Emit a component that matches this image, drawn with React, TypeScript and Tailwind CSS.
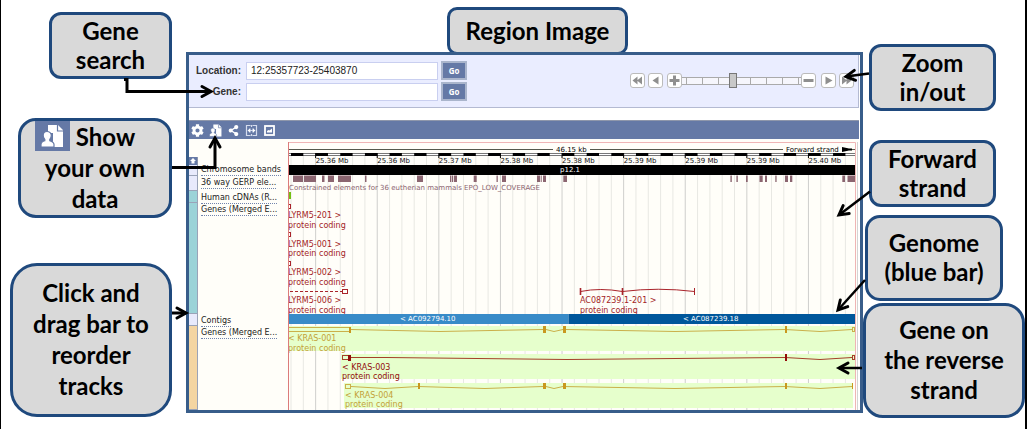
import React from "react";
import { FaCog, FaShareAlt } from "react-icons/fa";

const GRID_START = 291;
const GRID_STEP = 12.32;

const gridLines = Array.from({ length: 46 }, (_, i) => ({
  x: GRID_START + i * GRID_STEP,
  major: i % 5 === 2,
}));

const rulerLabels = [
  "25.36 Mb",
  "25.36 Mb",
  "25.37 Mb",
  "25.38 Mb",
  "25.38 Mb",
  "25.39 Mb",
  "25.39 Mb",
  "25.39 Mb",
  "25.40 Mb",
];

const gerpElements: [number, number][] = [
  [293, 10], [304, 12], [322, 2.5], [328, 6], [338, 13], [365, 1.5], [417, 6],
  [450, 1.3], [452, 1.2], [454, 3], [473.7, 3], [496.5, 1.3], [502, 4],
  [537, 3], [540.7, 1], [543, 3], [563.3, 3.7], [730.4, 1.4], [736.4, 1.4],
  [746, 1.7], [759.5, 3.2], [765, 2], [775.3, 1.3], [785, 3], [790, 2.3],
  [842.3, 2.7], [847.5, 8],
];

function Callout({ lines, className, icon }: { lines: string[]; className: string; icon?: React.ReactNode }) {
  return (
    <div
      className={`flex flex-col items-center justify-center border-3 border-[#1f497d] bg-[#d9d9d9] pb-0.5 text-center font-['Lato',sans-serif] text-[24px] font-bold text-black ${className}`}
    >
      {lines.map((line, i) => (
        <span key={line} className={`flex items-center gap-1.5 whitespace-nowrap ${icon && i === 0 ? "pr-5" : ""}`}>
          {i === 0 && icon}
          {line}
        </span>
      ))}
    </div>
  );
}

function UserDataIcon({ className }: { className: string }) {
  return (
    <svg viewBox="0 0 24 24" className={className} aria-hidden="true">
      <path d="M8 1h10l5 5v17H13V9H8z" fill="#fff" />
      <path d="M17.500 1v6H23" fill="none" stroke="#6579a6" strokeWidth="1.200" />
      <path
        d="M7 7.500c-2.500 0-3.800 1.800-3.800 4 0 1.800.8 3 1.600 3.800v1.400C2.500 17.400 1 18.400 1 20.500V23h13v-2.500c0-2.100-2-3.100-4.200-3.800v-1.400c.8-.8 1.500-2 1.500-3.800 0-2.200-1.800-4-4.300-4z"
        fill="#fff"
        stroke="#6579a6"
        strokeWidth="1.200"
      />
    </svg>
  );
}

function ResizeIcon() {
  return (
    <svg viewBox="0 0 13 13" className="size-[13px]" aria-hidden="true">
      <path d="M5.500 1.500h-4v10h4M7.500 1.500h4v10h-4M6.500 1v2M6.500 10v2" fill="none" stroke="#d5dcee" strokeWidth="1.200" />
      <path d="M3 6.500h7M5 4.500v4M8 4.500v4" stroke="#d5dcee" strokeWidth="1.200" />
      <path d="M2.500 6.500l2.500-2v4zM10.500 6.500l-2.500-2v4z" fill="#fff" />
    </svg>
  );
}

function PictureIcon() {
  return (
    <svg viewBox="0 0 13 13" className="size-[13px]" aria-hidden="true">
      <rect x="2" y="2" width="9" height="9" fill="none" stroke="#fff" strokeWidth="1.800" />
      <path d="M4 8.500V7l1.500-1 1 .5L9 4.500v4z" fill="#fff" />
    </svg>
  );
}

function SearchRow({ id, label, value }: { id: string; label: string; value: string }) {
  return (
    <form className="flex items-center" onSubmit={(e) => e.preventDefault()}>
      <label htmlFor={id} className="w-[52px] text-right text-[10px] leading-3 font-bold text-[#333]">
        {label}
      </label>
      <input
        id={id}
        defaultValue={value}
        className="ml-[5px] h-[18px] w-[192px] border border-[#c9cff0] bg-white px-1 text-[10px] text-[#222] outline-none"
      />
      <button className="ml-[3px] h-[19px] w-[26px] border-2 border-[#aab5cc] bg-[#6579a6] font-['Open_Sans',sans-serif] text-[8px] leading-3 font-bold text-white">
        Go
      </button>
    </form>
  );
}

function NavButton({ label, path, className = "" }: { label: string; path: string; className?: string }) {
  return (
    <button aria-label={label} className={`size-[15px] rounded-[3px] border border-[#bbb] bg-white ${className}`}>
      <svg viewBox="0 0 13 13" className="size-[13px]" aria-hidden="true">
        <path d={path} fill="#8f8f8f" />
      </svg>
    </button>
  );
}

function ZoomControl() {
  return (
    <div className="flex items-center">
      <NavButton label="Scroll far left" path="M6.500 2.500v8L1.500 6.500zM11 2.500v8L6 6.500z" className="mr-[3px]" />
      <NavButton label="Scroll left" path="M9.500 2.500v8l-6-4z" className="mr-1" />
      <NavButton label="Zoom in" path="M5 1.500h3v3.500h3.500v3H8v3.500H5V8H1.500V5H5z" />
      <input
        type="range"
        aria-label="Zoom level"
        min={0}
        max={12}
        step="any"
        defaultValue={5.1}
        className="h-2 w-[119px] appearance-none border-y border-[#aaa] bg-[#f6f6fc] bg-[repeating-linear-gradient(90deg,transparent_0px,transparent_4px,#aaa_4px,#aaa_5px,transparent_5px,transparent_16px)] [&::-webkit-slider-thumb]:h-[15px] [&::-webkit-slider-thumb]:w-2 [&::-webkit-slider-thumb]:appearance-none [&::-webkit-slider-thumb]:border [&::-webkit-slider-thumb]:border-[#777] [&::-webkit-slider-thumb]:bg-[#c8c8c8]"
      />
      <NavButton label="Zoom out" path="M1.500 5h10v3h-10z" className="mr-[5px]" />
      <NavButton label="Scroll right" path="M3.500 2.500v8l7-4z" className="mr-[3px]" />
      <NavButton label="Scroll far right" path="M2 2.500v8l5-4zM6.500 2.500v8l5-4z" />
    </div>
  );
}

const tracks = [
  { name: "Chromosome bands", row: "h-[11px]", handle: "bg-[#e8eafc]" },
  { name: "36 way GERP ele...", row: "h-[15px]", handle: "bg-[#e8eafc]" },
  { name: "Human cDNAs (R...", row: "h-3", handle: "bg-[#9bd3d8]" },
  { name: "Genes (Merged E...", row: "h-[111px]", handle: "bg-[#9bd3d8]" },
  { name: "Contigs", row: "h-3", handle: "bg-[#e8eafc]" },
  { name: "Genes (Merged E...", row: "h-[84px]", handle: "bg-[#f4d5a2]" },
];

function TrackList() {
  return (
    <div className="w-[97px] shrink-0 pt-[18px]">
      <div className="flex h-2 w-[9px] items-center justify-center border-r border-[#8d96ad] bg-[#6579a6]">
        <svg viewBox="0 0 8 8" className="size-2" aria-hidden="true">
          <path d="M4 1l3 3H5.500v2.500h-3V4H1z" fill="#fff" />
        </svg>
      </div>
      {tracks.map((t, i) => (
        <div key={i} className={`flex items-start ${t.row}`}>
          <div className={`w-[9px] shrink-0 cursor-move self-stretch border-r border-b border-[#9aa3b8] ${t.handle}`} />
          <a
            href="#track"
            className={`ml-[3px] border-b border-dotted border-[#7184ad] font-['DejaVu_Sans',sans-serif] text-[8px] leading-[10px] whitespace-nowrap text-[#222] ${i > 0 ? "mt-0.5" : ""}`}
          >
            {t.name}
          </a>
        </div>
      ))}
    </div>
  );
}

function GeneLabel({ x, y, name }: { x: number; y: number; name: string }) {
  return (
    <>
      <text x={x} y={y}>{name}</text>
      <text x={x} y={y + 9.5}>protein coding</text>
    </>
  );
}

function RegionChart() {
  return (
    <svg
      viewBox="286 139 572 271"
      preserveAspectRatio="xMinYMin meet"
      className="block h-[271px] min-w-0 flex-1 font-['DejaVu_Sans',sans-serif] text-[8px]"
      role="img"
      aria-label="Genes on chromosome 12 region 25357723 to 25403870"
    >
      {gridLines.map(({ x, major }) => (
        <path key={x} d={`M${x} 156V410`} stroke={major ? "#cfcfcc" : "#e8e8e3"} strokeWidth="1" />
      ))}

      {/* Ruler */}
      <path d="M288 149.500H553M590 149.500H783M851 149.500H855.500" stroke="#55584c" />
      <path d="M842 147l7 1.500h3v2h-3L842 152z" fill="#000" />
      <g fill="#000" className="text-[7px]">
        <text x="556" y="152">46.15 kb</text>
        <text x="786" y="152">Forward strand</text>
      </g>
      <rect x="288" y="153" width="567.500" height="3" fill="#777" />
      <rect x="288" y="154" width="567.500" height="1" fill="#fff" />
      {gridLines.map(({ x }, i) =>
        i % 2 === 0 ? <rect key={x} x={x} y="153" width={Math.min(GRID_STEP, 855.5 - x)} height="3" fill="#000" /> : null,
      )}
      {rulerLabels.map((label, i) => {
        const x = GRID_START + (2 + i * 5) * GRID_STEP;
        return (
          <g key={i}>
            <path d={`M${x} 153v5`} stroke="#000" />
            <text x={x} y="163" fill="#111" className="text-[7px]">{label}</text>
          </g>
        );
      })}

      {/* Chromosome band */}
      <rect x="288" y="165" width="567.500" height="10" fill="#000" />
      <text x="560" y="172" fill="#fff" className="text-[7px]">p12.1</text>

      {/* Constrained elements */}
      {gerpElements.map(([x, w]) => (
        <rect key={x} x={x} y="175.500" width={w} height="6.500" fill="#8b6570" />
      ))}
      <text x="289" y="190" fill="#8b6570" className="text-[7px]">
        Constrained elements for 36 eutherian mammals EPO_LOW_COVERAGE
      </text>
      <rect x="288" y="192" width="3" height="7" fill="#74c012" />

      {/* Forward strand transcripts */}
      <g fill="none" stroke="#a9242b">
        <rect x="288.500" y="204.500" width="2" height="4" />
        <rect x="288.500" y="232.500" width="2" height="4" />
        <rect x="288.500" y="261.500" width="2" height="4" />
        <path d="M290 291.500H342" strokeDasharray="3 2" />
        <rect x="342.500" y="289.500" width="5" height="4" />
        <path d="M580.500 291.500Q600 287.500 622.500 291.500Q658 287 694.500 291.500" />
        <path d="M580.500 288v7M622.500 288v7" strokeWidth="1.600" />
        <path d="M694.500 288v7" />
      </g>
      <g fill="#a31d25">
        <GeneLabel x={288} y={218} name="LYRM5-201 >" />
        <GeneLabel x={288} y={246.5} name="LYRM5-001 >" />
        <GeneLabel x={288} y={275} name="LYRM5-002 >" />
        <GeneLabel x={288} y={303} name="LYRM5-006 >" />
        <GeneLabel x={580} y={303} name="AC087239.1-201 >" />
      </g>

      {/* Contigs */}
      <rect x="288" y="314" width="280.500" height="10" fill="#388bc8" />
      <rect x="568.500" y="314" width="287" height="10" fill="#00579b" />
      <g fill="#fff" className="text-[7px]">
        <text x="400" y="321">&lt; AC092794.10</text>
        <text x="683" y="321">&lt; AC087239.18</text>
      </g>

      {/* Reverse strand transcripts */}
      <g fill="#e6ffcc">
        <rect x="288" y="326" width="567.500" height="25" />
        <rect x="341" y="354" width="514.500" height="25" />
        <rect x="344" y="383" width="509" height="25" />
      </g>
      <g fill="none" stroke="#cbb04a">
        <rect x="288.500" y="327.500" width="61" height="4" />
        <path d="M351 329.500L440 331.500L543 329.500M546 329.500L554 331.500L563 329.500M566 329.500L675 331.500L785 329.500L820 331.500L852 329.500" />
        <rect x="852.500" y="327.500" width="2" height="4" />
        <rect x="345.500" y="384.500" width="5" height="4" />
        <path d="M351 386.500L385 388.500L418 386.500L485 388.500L543 386.500M546 386.500L554 388.500L563 386.500L675 388.500L785 386.500L820 388.500L852 386.500" />
      </g>
      <g fill="#c9981f">
        <rect x="349" y="327" width="2" height="6" />
        <rect x="543" y="326" width="3" height="7" />
        <rect x="563" y="326" width="3" height="7" />
        <rect x="785" y="326" width="2" height="7" />
        <rect x="418" y="383" width="2" height="6" />
        <rect x="543" y="383" width="3" height="6" />
        <rect x="563" y="383" width="3" height="6" />
        <rect x="785" y="383" width="2" height="6" />
        <rect x="852" y="383" width="1" height="6" />
      </g>
      <g fill="#c3a136">
        <GeneLabel x={288} y={341} name="< KRAS-001" />
        <GeneLabel x={345} y={397.5} name="< KRAS-004" />
      </g>
      <g fill="none" stroke="#a5402a">
        <rect x="342.500" y="355.500" width="6" height="4" />
        <path d="M351 357.500H387L567 359.500L785 357.500L820 359.500L852 357.500" />
        <rect x="852.500" y="355.500" width="2" height="4" />
      </g>
      <g fill="#930c0c">
        <rect x="348" y="355" width="3" height="6" />
        <rect x="785" y="354" width="2" height="7" />
        <GeneLabel x={342} y={369.5} name="< KRAS-003" />
      </g>

      <path d="M288 142.500H855.500V410" fill="none" stroke="#efb5b5" />
      <path d="M288.500 142V410" stroke="#dc7b7b" />
      <path d="M857.500 142V410" stroke="#d4d4d4" />
    </svg>
  );
}

function Browser() {
  return (
    <section className="relative border-3 border-[#385d8a] bg-white font-['Liberation_Sans',sans-serif]">
      <div className="mr-px flex h-[53px] justify-between border-r border-b border-[#b4bad2] bg-[#eaedff] pt-1.5">
        <div className="flex flex-col gap-0.5">
          <SearchRow id="location" label="Location:" value="12:25357723-25403870" />
          <SearchRow id="gene" label="Gene:" value="" />
        </div>
        <div className="pt-3 pr-1">
          <ZoomControl />
        </div>
      </div>
      <div className="mt-3 mr-px flex h-[19px] items-center gap-[5px] border-t border-[#8f97ab] bg-[#6579a6] pl-0.5 text-white">
        <button aria-label="Configure this image"><FaCog className="size-[13px]" /></button>
        <button aria-label="Show your own data"><UserDataIcon className="size-[13px]" /></button>
        <button aria-label="Share this image"><FaShareAlt className="size-[13px] p-px" /></button>
        <button aria-label="Resize this image"><ResizeIcon /></button>
        <button aria-label="Export this image"><PictureIcon /></button>
      </div>
      <div className="mr-0.5 flex bg-[#fffef9]">
        <TrackList />
        <RegionChart />
      </div>
    </section>
  );
}

function ArrowHead({ id }: { id: string }) {
  return (
    <marker id={id} markerUnits="userSpaceOnUse" orient="auto" markerWidth="16" markerHeight="16" refX="11" refY="7" overflow="visible">
      <path d="M2 2L11 7L2 12" fill="none" stroke="#000" strokeWidth="3" strokeLinecap="round" strokeLinejoin="miter" />
    </marker>
  );
}

export default function App() {
  return (
    <main className="relative flex min-h-screen items-start border-r-2 border-l border-black bg-white">
      <div className="flex w-[185px] shrink-0 flex-col items-end pt-3 pr-3.5">
        <Callout lines={["Gene", "search"]} className="h-[67px] w-[123px] rounded-xl leading-[29px]" />
        <Callout
          lines={["Show", "your own", "data"]}
          icon={
            <span className="flex h-[30px] w-[35px] items-center justify-center bg-[#6579a6]">
              <UserDataIcon className="size-6" />
            </span>
          }
          className="mt-[39px] h-[100px] w-[154px] rounded-[18px] leading-[31px]"
        />
        <Callout
          lines={["Click and", "drag bar to", "reorder", "tracks"]}
          className="mt-[45px] h-[154px] w-[162px] rounded-[27px] leading-[31px]"
        />
      </div>

      <div className="min-w-0 flex-1 pt-[7px]">
        <div className="flex justify-center pl-[26px]">
          <Callout lines={["Region Image"]} className="-mb-[3px] h-12 w-[181px] rounded-[10px] leading-[29px]" />
        </div>
        <Browser />
      </div>

      <div className="relative flex w-[162px] shrink-0 flex-col items-start pt-11">
        <Callout lines={["Zoom", "in/out"]} className="ml-1.5 h-[67px] w-[127px] rounded-xl leading-[29px]" />
        <Callout lines={["Forward", "strand"]} className="mt-[29px] ml-1.5 h-[67px] w-[127px] rounded-xl leading-[29px]" />
        <Callout lines={["Genome", "(blue bar)"]} className="mt-2 ml-0.5 h-[86px] w-[138px] rounded-[15px] leading-[29px]" />
        <Callout lines={["Gene on", "the reverse", "strand"]} className="mt-0.5 h-[115px] w-[162px] rounded-[20px] leading-[30px]" />
      </div>

      <svg viewBox="1 0 240 429" className="pointer-events-none absolute top-0 left-0 h-[429px] w-[240px]" aria-hidden="true">
        <defs><ArrowHead id="head-left" /></defs>
        <g fill="none" stroke="#000" strokeWidth="3">
          <path d="M124 79.500H127V91.500H211" markerEnd="url(#head-left)" />
          <path d="M172 167.500H215V138" markerEnd="url(#head-left)" />
          <path d="M172 313H186" markerEnd="url(#head-left)" />
        </g>
      </svg>
      <svg viewBox="825 0 200 429" className="pointer-events-none absolute top-0 right-0 h-[429px] w-[200px]" aria-hidden="true">
        <defs><ArrowHead id="head-right" /></defs>
        <g fill="none" stroke="#000" strokeWidth="2.500">
          <path d="M869 73.500L846 76.500" markerEnd="url(#head-right)" />
          <path d="M870 191.500L839 215" markerEnd="url(#head-right)" />
          <path d="M865 280L838 310" markerEnd="url(#head-right)" />
          <path d="M862 368H839" markerEnd="url(#head-right)" />
        </g>
      </svg>
    </main>
  );
}
